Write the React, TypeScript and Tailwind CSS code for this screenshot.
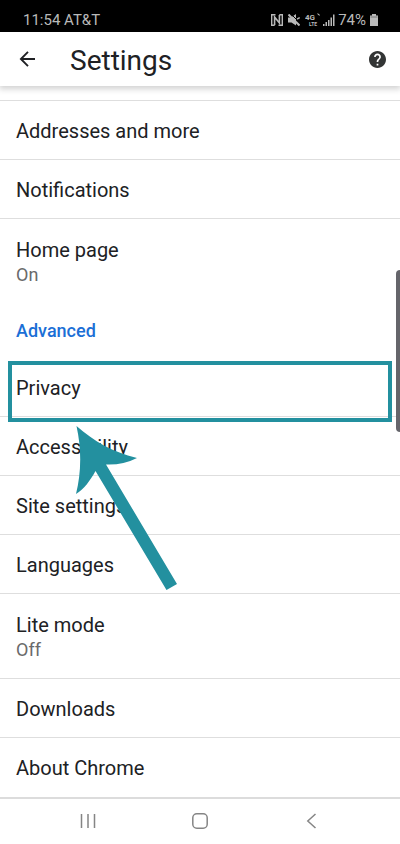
interface SettingsItem {
  title: string;
  summary?: string;
}

const basicItems: SettingsItem[] = [
  { title: "Addresses and more" },
  { title: "Notifications" },
];

const advancedItems: SettingsItem[] = [
  { title: "Accessibility" },
  { title: "Site settings" },
  { title: "Languages" },
  { title: "Lite mode", summary: "Off" },
  { title: "Downloads" },
];

function SettingsRow({
  item,
  divider = true,
}: {
  item: SettingsItem;
  divider?: boolean;
}) {
  return (
    <button
      type="button"
      className={`block w-full px-4 text-left ${
        item.summary ? "h-[85px] pt-[3px]" : "h-[59px] pt-px"
      } ${divider ? "border-b border-[#dedede]" : ""}`}
    >
      <span className="block text-xl leading-6 text-[#202124]">{item.title}</span>
      {item.summary && (
        <span className="block text-lg leading-[26px] text-[#6a6a6a]">{item.summary}</span>
      )}
    </button>
  );
}

function StatusBar() {
  return (
    <div className="flex h-8 items-center justify-between bg-black pt-[7px] pr-[22px] pl-[23px] text-[15px] leading-5 text-[#b9b9b9]">
      <span>11:54 AT&amp;T</span>
      <div className="flex items-center">
        <svg className="mr-[5px] h-3 w-3" viewBox="0 0 12 12" fill="none" stroke="currentColor">
          <path d="M4.500 .7H.7v10.600h3M7.500 11.300h3.800V.7h-3" strokeWidth="1.400" />
          <path d="M3.600 11V3l4.800 6V1" strokeWidth="1.600" />
        </svg>
        <svg className="mr-[5px] h-3 w-3" viewBox="0 0 12 12" fill="currentColor">
          <path d="M0 3.500h3L8 0v11.500L3.500 8.500H0Z" />
          <path d="M2-1 13 10" stroke="#000" strokeWidth="1" />
          <path d="M.5.500l11 11" stroke="currentColor" strokeWidth="2" />
          <path d="M9 5.200l2.700-1.700" stroke="currentColor" strokeWidth="1.400" />
        </svg>
        <svg className="mr-0.5 h-3.5 w-4" viewBox="0 0 16 14" fill="currentColor">
          <text x="0" y="7" fontSize="8" fontWeight="700">
            4G
          </text>
          <text x="4" y="13" fontSize="5" fontWeight="700">
            LTE
          </text>
          <path d="M12.500 0l2.500 2-.7.700L12.500 1.200Z" />
        </svg>
        <svg className="mr-[3px] h-3 w-3" viewBox="0 0 12 12" fill="currentColor">
          <path d="M0 10h1.500v2H0ZM2.500 8H4v4H2.500ZM5 6h1.500v6H5ZM7.500 3.500H9V12H7.500ZM10 .5h1.500V12H10Z" />
        </svg>
        <span>74%</span>
        <svg className="ml-1 h-3 w-2" viewBox="0 0 8 12" fill="currentColor">
          <path d="M2 0h4v1.500h2V12H0V1.500h2Z" />
          <path d="M.5 3h7" stroke="#777" strokeWidth="1" />
        </svg>
      </div>
    </div>
  );
}

function Header() {
  return (
    <header className="flex h-[54px] items-center bg-white pr-3.5 pl-4 shadow-[0_2px_6px_1px_rgba(0,0,0,0.18)]">
      <button type="button" aria-label="Back" className="text-[#202124]">
        <svg className="h-6 w-6" viewBox="0 0 24 24" fill="none" stroke="currentColor" strokeWidth="1.900">
          <path d="M19 12H4.800M12 4.900 4.900 12l7.100 7.100" />
        </svg>
      </button>
      <h1 className="ml-[30px] flex-1 pt-1 text-[28px] leading-8 text-[#202124]">Settings</h1>
      <button type="button" aria-label="Help" className="text-[#333535]">
        <svg className="h-[17px] w-[17px]" viewBox="2 2 20 20" fill="currentColor">
          <path d="M12 2C6.480 2 2 6.480 2 12s4.480 10 10 10 10-4.480 10-10S17.520 2 12 2zm1 17h-2v-2h2v2zm2.070-7.750-.9.920C13.450 12.900 13 13.500 13 15h-2v-.5c0-1.100.450-2.100 1.170-2.830l1.240-1.260c.370-.360.590-.860.590-1.410 0-1.100-.9-2-2-2s-2 .9-2 2H8c0-2.210 1.790-4 4-4s4 1.790 4 4c0 .880-.360 1.680-.930 2.250z" />
        </svg>
      </button>
    </header>
  );
}

function NavigationBar() {
  return (
    <nav className="grid h-[46px] grid-cols-3 items-center border-t-2 border-[#dcdcdc] px-8 text-[#858585]">
      <button type="button" aria-label="Recent apps" className="justify-self-center">
        <svg className="h-4 w-4" viewBox="0 0 16 16" fill="none" stroke="currentColor" strokeWidth="1.500">
          <path d="M1.500 1v14M8 1v14M14.500 1v14" />
        </svg>
      </button>
      <button type="button" aria-label="Home" className="justify-self-center">
        <svg className="h-4 w-4" viewBox="0 0 16 16" fill="none" stroke="currentColor" strokeWidth="1.500">
          <rect x="0.800" y="0.800" width="14.400" height="14.400" rx="4" />
        </svg>
      </button>
      <button type="button" aria-label="Back" className="justify-self-center">
        <svg className="h-4 w-4" viewBox="0 0 16 16" fill="none" stroke="currentColor" strokeWidth="1.500">
          <path d="M11.500 1 3.800 8l7.700 7" />
        </svg>
      </button>
    </nav>
  );
}

export default function App() {
  return (
    <div className="min-h-screen bg-white font-[Roboto,sans-serif]">
      <StatusBar />
      <Header />

      <main className="relative pt-3.5">
        <div className="border-t border-[#dedede]">
          {basicItems.map((item) => (
            <SettingsRow key={item.title} item={item} />
          ))}
          <SettingsRow item={{ title: "Home page", summary: "On" }} divider={false} />
        </div>

        <h2 className="flex h-[54px] items-center px-4 text-lg font-medium text-[#1b6fd6]">
          Advanced
        </h2>

        {/* Highlighted row with the pointer arrow on top */}
        <div className="relative">
          <SettingsRow item={{ title: "Privacy" }} />
          <div className="pointer-events-none absolute inset-x-2 top-[3px] h-[61px] border-4 border-[#23909f]" />
          <svg
            className="pointer-events-none absolute top-16 left-[70px] h-[172px] w-[112px]"
            viewBox="70 422 112 172"
            fill="#23909f"
          >
            <path d="M76.500 426C94 441 112 452 137 458C127 463 117 465 106 464.500L177 584L166.500 590L95.500 471C90 481 84 489 76 494C81 474 82 451 76.500 426Z" />
          </svg>
        </div>

        {advancedItems.map((item) => (
          <SettingsRow key={item.title} item={item} />
        ))}
        <SettingsRow item={{ title: "About Chrome" }} divider={false} />

        {/* Edge panel handle */}
        <div className="absolute top-[184px] right-0 h-[162px] w-1 rounded-l bg-[#65656b]" />
      </main>

      <NavigationBar />
    </div>
  );
}
